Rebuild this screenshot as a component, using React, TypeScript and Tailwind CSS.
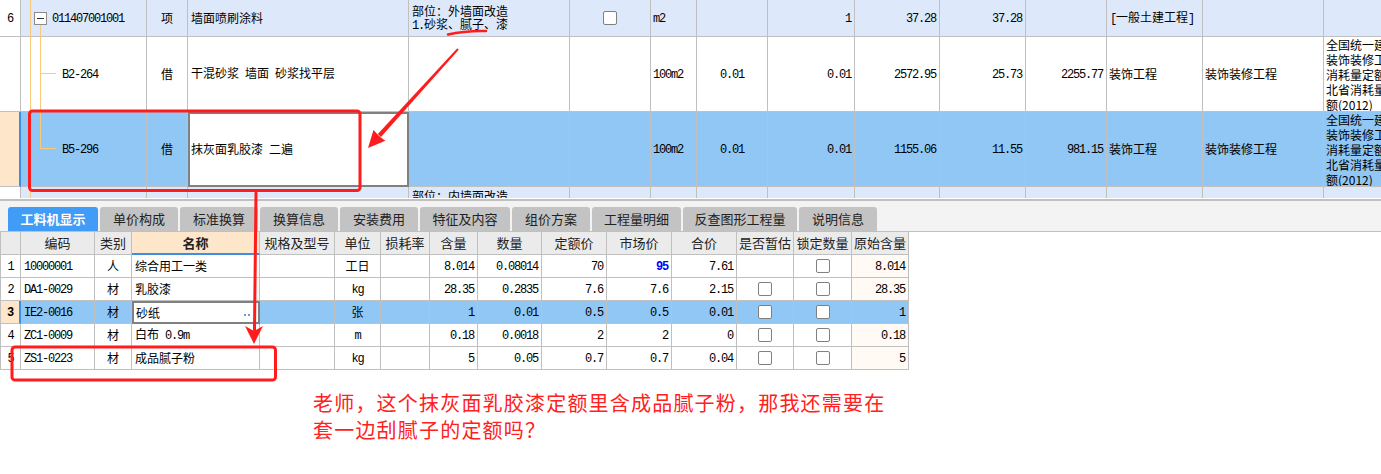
import React from "react";

const TOP = "grid w-[1404px] grid-cols-[21px_126px_41px_221px_161px_81px_46px_71px_87px_85px_86px_81px_96px_121px_80px]";
const BOT = "grid w-[909px] grid-cols-[21px_74px_37px_128px_75px_46px_49px_48px_64px_65px_65px_65px_57px_58px_57px]";
const LINE = "border-r border-b border-[#c0c0c0]";

// ascii runs get a narrow mono face, close to the old song-style grid fonts
function T({ s }: { s: string }) {
  return (
    <span className="whitespace-pre">
      {s.split(/([\x20-\x7e]+)/).map((p, i) =>
        i % 2 === 1 ? (
          <span key={i} className="font-['Liberation_Mono',monospace] tracking-[-1.2px]">{p}</span>
        ) : (
          p
        )
      )}
    </span>
  );
}

function C({ children, className = "", edge = LINE }: { children?: React.ReactNode; className?: string; edge?: string }) {
  return <div className={`flex items-center overflow-hidden ${edge} ${className}`}>{children}</div>;
}

function Box() {
  return <span className="h-[14px] w-[14px] rounded-[2px] border border-[#808080] bg-white" />;
}

const subRows = [
  { code: "B2-264", name: "干混砂浆 墙面 砂浆找平层", price: "2572.95", unit: "25.73", total: "2255.77", sel: false },
  { code: "B5-296", name: "抹灰面乳胶漆 二遍", price: "1155.06", unit: "11.55", total: "981.15", sel: true },
];

const tabs = [
  { label: "工料机显示", w: "w-[90px]" },
  { label: "单价构成", w: "w-[78px]" },
  { label: "标准换算", w: "w-[78px]" },
  { label: "换算信息", w: "w-[78px]" },
  { label: "安装费用", w: "w-[78px]" },
  { label: "特征及内容", w: "w-[90px]" },
  { label: "组价方案", w: "w-[78px]" },
  { label: "工程量明细", w: "w-[89px]" },
  { label: "反查图形工程量", w: "w-[114px]" },
  { label: "说明信息", w: "w-[78px]" },
];

const headers = ["", "编码", "类别", "名称", "规格及型号", "单位", "损耗率", "含量", "数量", "定额价", "市场价", "合价", "是否暂估", "锁定数量", "原始含量"];

const items = [
  { n: "1", code: "10000001", kind: "人", name: "综合用工一类", unit: "工日", qty: "8.014", amount: "0.08014", quota: "70", market: "95", sum: "7.61", est: false, orig: "8.014" },
  { n: "2", code: "DA1-0029", kind: "材", name: "乳胶漆", unit: "kg", qty: "28.35", amount: "0.2835", quota: "7.6", market: "7.6", sum: "2.15", est: true, orig: "28.35" },
  { n: "3", code: "IE2-0016", kind: "材", name: "砂纸", unit: "张", qty: "1", amount: "0.01", quota: "0.5", market: "0.5", sum: "0.01", est: true, orig: "1" },
  { n: "4", code: "ZC1-0009", kind: "材", name: "白布 0.9m", unit: "m", qty: "0.18", amount: "0.0018", quota: "2", market: "2", sum: "0", est: true, orig: "0.18" },
  { n: "5", code: "ZS1-0223", kind: "材", name: "成品腻子粉", unit: "kg", qty: "5", amount: "0.05", quota: "0.7", market: "0.7", sum: "0.04", est: true, orig: "5" },
];

const NORM = "全国统一建筑装饰装修工程消耗量定额河北省消耗量定额(2012)";

export default function App() {
  return (
    <div className="relative h-[474px] w-[1381px] overflow-hidden bg-white font-['Noto_Sans_CJK_SC',sans-serif] text-[12px] text-black">
      {/* upper grid: list of items */}
      <div className="h-[198px] overflow-hidden">
        <div className={`${TOP} h-[37px] bg-[#dde9fb]`}>
          <C className="justify-center bg-white"><T s="6" /></C>
          <C className="gap-[5px] pl-[13px]">
            <span className="flex h-[13px] w-[13px] items-center justify-center border border-[#8c8c8c] bg-white">
              <span className="h-px w-[7px] bg-[#333]" />
            </span>
            <T s="011407001001" />
          </C>
          <C className="justify-center">项</C>
          <C className="pl-[3px]">墙面喷刷涂料</C>
          <C className="pl-[3px]">
            <div className="leading-[13px]">
              <div>部位：外墙面改造</div>
              <div><T s="1." />砂浆、腻子、漆</div>
            </div>
          </C>
          <C className="justify-center"><Box /></C>
          <C className="pl-[2px]"><T s="m2" /></C>
          <C />
          <C className="justify-end pr-[3px]"><T s="1" /></C>
          <C className="justify-end pr-[3px]"><T s="37.28" /></C>
          <C className="justify-end pr-[3px]"><T s="37.28" /></C>
          <C />
          <C className="pl-[3px]"><T s="[一般土建工程]" /></C>
          <C />
          <C />
        </div>

        {subRows.map((r) => (
          <div key={r.code} className={`${TOP} h-[75px] ${r.sel ? "bg-[#91c7f5]" : "bg-white"}`}>
            {r.sel ? (
              <C className="bg-[#fde6c9]" edge="border-b border-b-[#c0c0c0] border-r-2 border-r-[#3d8fe6]" />
            ) : (
              <C className="bg-white" />
            )}
            <C className="pl-[41px]"><T s={r.code} /></C>
            <C className="justify-center">借</C>
            {r.sel ? (
              <C className="bg-white pl-[1px]" edge="border-2 border-[#808080]"><T s={r.name} /></C>
            ) : (
              <C className="pl-[3px]"><T s={r.name} /></C>
            )}
            <C />
            <C />
            <C className="pl-[2px]"><T s="100m2" /></C>
            <C className="justify-center"><T s="0.01" /></C>
            <C className="justify-end pr-[3px]"><T s="0.01" /></C>
            <C className="justify-end pr-[3px]"><T s={r.price} /></C>
            <C className="justify-end pr-[3px]"><T s={r.unit} /></C>
            <C className="justify-end pr-[3px]"><T s={r.total} /></C>
            <C className="pl-[2px]">装饰工程</C>
            <C className="pl-[2px]">装饰装修工程</C>
            <C className="break-all pl-[2px] leading-[15px]">{NORM}</C>
          </div>
        ))}

        <div className={`${TOP} h-[36px] bg-[#dde9fb]`}>
          <C className="bg-white" />
          <C />
          <C />
          <C />
          <C className="!items-start pl-[3px] pt-[2px] leading-[13px]">部位：内墙面改造</C>
          <C />
          <C />
          <C />
          <C />
          <C />
          <C />
          <C />
          <C />
          <C />
          <C />
        </div>
      </div>

      <div className="h-px bg-white" />
      <div className="h-[2px] bg-[#c0c0c0]" />

      {/* tab strip */}
      <div className="flex h-[31px] items-end gap-[2px] border-b border-[#c0c0c0] bg-[#f3f3f3] pl-[8px]">
        {tabs.map((t, i) => (
          <div
            key={t.label}
            className={`flex h-[24px] ${t.w} items-center justify-center rounded-t-[3px] text-[13px] ${
              i === 0 ? "bg-[#409cf6] font-bold text-white" : "bg-[#c3c3c3] text-[#222]"
            }`}
          >
            {t.label}
          </div>
        ))}
      </div>

      {/* lower grid: labour / material / machine */}
      <div className={`${BOT} h-[23px] bg-[#ebebeb] text-[13px] text-[#222]`}>
        {headers.map((h, i) =>
          h === "名称" ? (
            <C key={i} className="justify-center bg-[#fde6c9] font-bold" edge="border-r border-r-[#c0c0c0] border-b-2 border-b-[#3d8fe6]">{h}</C>
          ) : (
            <C key={i} className={`justify-center ${i === 0 ? "border-l" : ""}`}>{h}</C>
          )
        )}
      </div>

      {items.map((it) => {
        const sel = it.n === "3";
        return (
          <div key={it.n} className={`${BOT} h-[23px] ${sel ? "bg-[#91c7f5]" : "bg-white"}`}>
            {sel ? (
              <C className="justify-center border-l border-l-[#c0c0c0] bg-[#fde6c9] font-bold" edge="border-b border-b-[#c0c0c0] border-r-2 border-r-[#3d8fe6]">
                <T s={it.n} />
              </C>
            ) : (
              <C className="justify-center border-l"><T s={it.n} /></C>
            )}
            <C className="pl-[3px]"><T s={it.code} /></C>
            <C className="justify-center">{it.kind}</C>
            {sel ? (
              <C className="justify-between bg-white pl-[2px] pr-[8px]" edge="border-2 border-[#808080]">
                {it.name}
                <span className="mt-[4px] flex gap-[2px]">
                  <span className="h-[2px] w-[2px] bg-[#6f9ad3]" />
                  <span className="h-[2px] w-[2px] bg-[#6f9ad3]" />
                </span>
              </C>
            ) : (
              <C className="pl-[3px]"><T s={it.name} /></C>
            )}
            <C />
            <C className="justify-center"><T s={it.unit} /></C>
            <C />
            <C className="justify-end pr-[3px]"><T s={it.qty} /></C>
            <C className="justify-end pr-[3px]"><T s={it.amount} /></C>
            <C className="justify-end pr-[3px]"><T s={it.quota} /></C>
            <C className={`justify-end pr-[3px] ${it.n === "1" ? "font-bold text-[#0000ff]" : ""}`}><T s={it.market} /></C>
            <C className="justify-end pr-[3px]"><T s={it.sum} /></C>
            <C className="justify-center">{it.est && <Box />}</C>
            <C className="justify-center"><Box /></C>
            <C className={`justify-end pr-[3px] ${sel ? "" : "bg-[#fffaf3]"}`}><T s={it.orig} /></C>
          </div>
        );
      })}

      {/* question note */}
      <div className="pl-[313px] pt-[19px] text-[20px] leading-[27px] tracking-[1.2px] text-[#ff2020]">
        <div>老师，这个抹灰面乳胶漆定额里含成品腻子粉，那我还需要在</div>
        <div>套一边刮腻子的定额吗？</div>
      </div>

      {/* tree connectors and red markup drawn over the grids */}
      <svg className="pointer-events-none absolute left-0 top-0" width="1381" height="474" viewBox="0 0 1381 474">
        <g stroke="#fbc97a" strokeWidth="1" fill="none">
          <path d="M30.5 0V198" />
          <path d="M40.5 25V148.5H56" />
          <path d="M40.5 73.5H56" />
        </g>
        <g stroke="#ff1c1c" fill="none" strokeLinecap="round">
          <path d="M448 34.5Q465 30.5 486 31" strokeWidth="2.5" />
          <rect x="29.5" y="111" width="330.5" height="79.5" rx="3" strokeWidth="3" />
          <rect x="12" y="347" width="263.5" height="33" rx="3" strokeWidth="3" />
          <path d="M256 193L254.5 330" strokeWidth="3" />
        </g>
        <g fill="#ff1c1c">
          <polygon points="458.7,49.7 457.3,48.3 377.8,133.9 381,136.9" />
          <polygon points="368,148 373.5,130 379,136 385.3,140.8" />
          <polygon points="254,344 245,326 254,331 263,326" />
        </g>
      </svg>
    </div>
  );
}
